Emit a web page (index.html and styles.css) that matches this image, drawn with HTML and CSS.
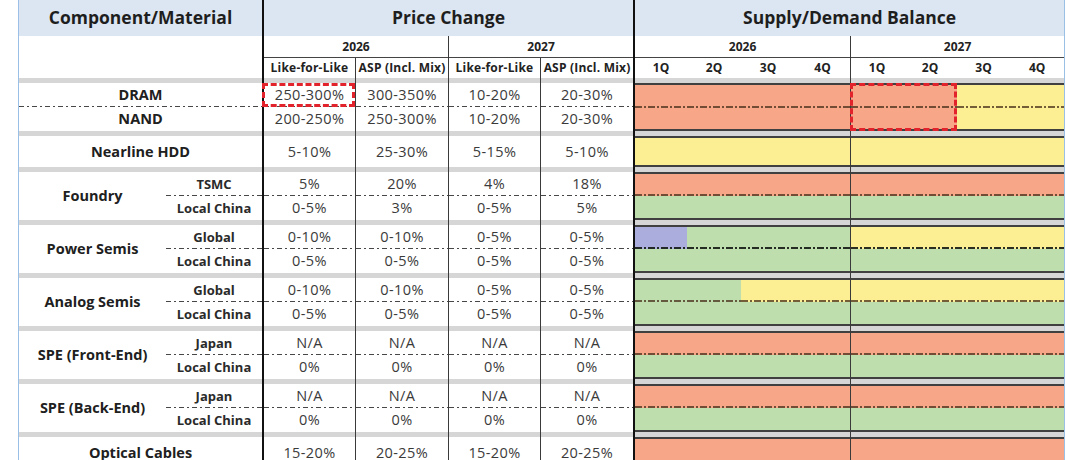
FILE: index.html
```html
<!DOCTYPE html>
<html lang="en">
<head>
<meta charset="utf-8">
<title>Component price and supply/demand outlook</title>
<link rel="stylesheet" href="styles.css">
</head>
<body>
<table class="tbl">
  <colgroup>
    <col class="w-main"><col class="w-sub">
    <col class="w-p1"><col class="w-p2"><col class="w-p3"><col class="w-p4">
    <col class="w-q54"><col class="w-q54"><col class="w-q54"><col class="w-q55">
    <col class="w-q53"><col class="w-q54"><col class="w-q53"><col class="w-q54">
  </colgroup>
  <tr class="r-head">
    <th colspan="2" class="h">Component/Material</th>
    <th colspan="4" class="h L2">Price Change</th>
    <th colspan="8" class="h L2">Supply/Demand Balance</th>
  </tr>
  <tr class="r-year">
    <td colspan="2" rowspan="2"></td>
    <th colspan="2" class="yr L2">2026</th>
    <th colspan="2" class="yr L1">2027</th>
    <th colspan="4" class="yr L2">2026</th>
    <th colspan="4" class="yr L1">2027</th>
  </tr>
  <tr class="r-subh">
    <th class="sh L2">Like-for-Like</th>
    <th class="sh L1">ASP (Incl. Mix)</th>
    <th class="sh L1">Like-for-Like</th>
    <th class="sh L1">ASP (Incl. Mix)</th>
    <th class="q L2">1Q</th><th class="q">2Q</th><th class="q">3Q</th><th class="q">4Q</th>
    <th class="q L1">1Q</th><th class="q">2Q</th><th class="q">3Q</th><th class="q">4Q</th>
  </tr>
  <tr class="sep"><td colspan="2"></td><td class="L2"></td><td class="L1"></td><td class="L1"></td><td class="L1"></td><td colspan="4" class="L2"></td><td colspan="4" class="L1"></td></tr>

  <!-- DRAM / NAND -->
  <tr class="r2">
    <td colspan="2" class="lbl pd">DRAM</td>
    <td class="v L2 pd hl">250-300%</td><td class="v L1 pd">300-350%</td><td class="v L1 pd">10-20%</td><td class="v L1 pd">20-30%</td>
    <td colspan="4" rowspan="2" class="L2 or t b dm"></td>
    <td colspan="2" rowspan="2" class="L1 or t b dm hl"></td>
    <td colspan="2" rowspan="2" class="ye t b dm"></td>
  </tr>
  <tr class="r2">
    <td colspan="2" class="lbl">NAND</td>
    <td class="v L2">200-250%</td><td class="v L1">250-300%</td><td class="v L1">10-20%</td><td class="v L1">20-30%</td>
  </tr>
  <tr class="sep"><td colspan="2"></td><td class="L2"></td><td class="L1"></td><td class="L1"></td><td class="L1"></td><td colspan="4" class="L2"></td><td colspan="4" class="L1"></td></tr>

  <!-- Nearline HDD -->
  <tr class="r1">
    <td colspan="2" class="lbl">Nearline HDD</td>
    <td class="v L2">5-10%</td><td class="v L1">25-30%</td><td class="v L1">5-15%</td><td class="v L1">5-10%</td>
    <td colspan="4" class="L2 ye t b"></td><td colspan="4" class="L1 ye t b"></td>
  </tr>
  <tr class="sep"><td colspan="2"></td><td class="L2"></td><td class="L1"></td><td class="L1"></td><td class="L1"></td><td colspan="4" class="L2"></td><td colspan="4" class="L1"></td></tr>

  <!-- Foundry -->
  <tr class="r2">
    <td rowspan="2" class="lbl">Foundry</td><td class="sub pd">TSMC</td>
    <td class="v L2 pd">5%</td><td class="v L1 pd">20%</td><td class="v L1 pd">4%</td><td class="v L1 pd">18%</td>
    <td colspan="4" class="L2 or t d"></td><td colspan="4" class="L1 or t d"></td>
  </tr>
  <tr class="r2">
    <td class="sub">Local China</td>
    <td class="v L2">0-5%</td><td class="v L1">3%</td><td class="v L1">0-5%</td><td class="v L1">5%</td>
    <td colspan="4" class="L2 gr b"></td><td colspan="4" class="L1 gr b"></td>
  </tr>
  <tr class="sep"><td colspan="2"></td><td class="L2"></td><td class="L1"></td><td class="L1"></td><td class="L1"></td><td colspan="4" class="L2"></td><td colspan="4" class="L1"></td></tr>

  <!-- Power Semis -->
  <tr class="r2">
    <td rowspan="2" class="lbl">Power Semis</td><td class="sub pd">Global</td>
    <td class="v L2 pd">0-10%</td><td class="v L1 pd">0-10%</td><td class="v L1 pd">0-5%</td><td class="v L1 pd">0-5%</td>
    <td class="L2 lv t d dk"></td><td colspan="3" class="gr t d dk"></td><td colspan="4" class="L1 ye t d dk"></td>
  </tr>
  <tr class="r2">
    <td class="sub">Local China</td>
    <td class="v L2">0-5%</td><td class="v L1">0-5%</td><td class="v L1">0-5%</td><td class="v L1">0-5%</td>
    <td colspan="4" class="L2 gr b"></td><td colspan="4" class="L1 gr b"></td>
  </tr>
  <tr class="sep"><td colspan="2"></td><td class="L2"></td><td class="L1"></td><td class="L1"></td><td class="L1"></td><td colspan="4" class="L2"></td><td colspan="4" class="L1"></td></tr>

  <!-- Analog Semis -->
  <tr class="r2">
    <td rowspan="2" class="lbl">Analog Semis</td><td class="sub pd">Global</td>
    <td class="v L2 pd">0-10%</td><td class="v L1 pd">0-10%</td><td class="v L1 pd">0-5%</td><td class="v L1 pd">0-5%</td>
    <td colspan="2" class="L2 gr t d"></td><td colspan="2" class="ye t d"></td><td colspan="4" class="L1 ye t d"></td>
  </tr>
  <tr class="r2">
    <td class="sub">Local China</td>
    <td class="v L2">0-5%</td><td class="v L1">0-5%</td><td class="v L1">0-5%</td><td class="v L1">0-5%</td>
    <td colspan="4" class="L2 gr b"></td><td colspan="4" class="L1 gr b"></td>
  </tr>
  <tr class="sep"><td colspan="2"></td><td class="L2"></td><td class="L1"></td><td class="L1"></td><td class="L1"></td><td colspan="4" class="L2"></td><td colspan="4" class="L1"></td></tr>

  <!-- SPE (Front-End) -->
  <tr class="r2">
    <td rowspan="2" class="lbl">SPE (Front-End)</td><td class="sub pd">Japan</td>
    <td class="v L2 pd">N/A</td><td class="v L1 pd">N/A</td><td class="v L1 pd">N/A</td><td class="v L1 pd">N/A</td>
    <td colspan="4" class="L2 or t d"></td><td colspan="4" class="L1 or t d"></td>
  </tr>
  <tr class="r2">
    <td class="sub">Local China</td>
    <td class="v L2">0%</td><td class="v L1">0%</td><td class="v L1">0%</td><td class="v L1">0%</td>
    <td colspan="4" class="L2 gr b"></td><td colspan="4" class="L1 gr b"></td>
  </tr>
  <tr class="sep"><td colspan="2"></td><td class="L2"></td><td class="L1"></td><td class="L1"></td><td class="L1"></td><td colspan="4" class="L2"></td><td colspan="4" class="L1"></td></tr>

  <!-- SPE (Back-End) -->
  <tr class="r2">
    <td rowspan="2" class="lbl">SPE (Back-End)</td><td class="sub pd">Japan</td>
    <td class="v L2 pd">N/A</td><td class="v L1 pd">N/A</td><td class="v L1 pd">N/A</td><td class="v L1 pd">N/A</td>
    <td colspan="4" class="L2 or t d"></td><td colspan="4" class="L1 or t d"></td>
  </tr>
  <tr class="r2">
    <td class="sub">Local China</td>
    <td class="v L2">0%</td><td class="v L1">0%</td><td class="v L1">0%</td><td class="v L1">0%</td>
    <td colspan="4" class="L2 gr b"></td><td colspan="4" class="L1 gr b"></td>
  </tr>
  <tr class="sep"><td colspan="2"></td><td class="L2"></td><td class="L1"></td><td class="L1"></td><td class="L1"></td><td colspan="4" class="L2"></td><td colspan="4" class="L1"></td></tr>

  <!-- Optical Cables -->
  <tr class="r1">
    <td colspan="2" class="lbl">Optical Cables</td>
    <td class="v L2">15-20%</td><td class="v L1">20-25%</td><td class="v L1">15-20%</td><td class="v L1">20-25%</td>
    <td colspan="4" class="L2 or t b"></td><td colspan="4" class="L1 or t b"></td>
  </tr>
</table>
</body>
</html>
```

FILE: styles.css
```css
html, body {
  margin: 0;
  padding: 0;
  background: #ffffff;
  overflow: hidden;
}

body {
  width: 1080px;
  height: 460px;
  font-family: "Open Sans", "Noto Sans", "Liberation Sans", sans-serif;
  color: #222222;
}

.tbl {
  margin-left: 18px;
  width: 1047px;
  table-layout: fixed;
  border-collapse: separate;
  border-spacing: 0;
  border-left: 1px solid #9bbfe7;
  border-right: 1px solid #9bbfe7;
}

.w-main { width: 147px; }
.w-sub { width: 96px; }
.w-p1 { width: 93px; }
.w-p2 { width: 93px; }
.w-p3 { width: 92px; }
.w-p4 { width: 93px; }
.w-q53 { width: 53px; }
.w-q54 { width: 54px; }
.w-q55 { width: 55px; }

.tbl th,
.tbl td {
  padding: 0;
  box-sizing: border-box;
  text-align: center;
  vertical-align: middle;
  white-space: nowrap;
  line-height: 1.1;
}

.tbl td {
  background-image: var(--lt, none), var(--lb, none), var(--ld, none);
  background-repeat: no-repeat, no-repeat, repeat-x;
  background-size: 100% 2px, 100% 2px, 13px var(--dh, 1px);
  background-position: 0 0, 0 100%, 0 var(--dy, 100%);
}

/* vertical rules */
.L2 { border-left: 2px solid #111111; }
.L1 { border-left: 1px solid #3a3a3a; }

/* row heights */
.r-head { height: 36px; }
.r-year { height: 22px; }
.r-subh { height: 20px; }
.sep { height: 5px; }
.r1 { height: 31px; }
.r2 { height: 24px; }

.sep td { background-color: #d6d6d6; }

/* header band */
.h {
  background: #dce6f2;
  font-size: 17.5px;
  font-weight: 700;
  color: #1e1e1e;
  padding-bottom: 3px;
}

.yr {
  font-size: 12px;
  font-weight: 700;
  color: #222222;
  background: linear-gradient(#444444, #444444) 0 100% / 100% 1px no-repeat;
}

.sh {
  font-size: 12px;
  font-weight: 700;
  letter-spacing: 0.2px;
  color: #222222;
}

.q {
  font-size: 12px;
  font-weight: 700;
  color: #222222;
}

/* body text */
.lbl {
  font-size: 14.5px;
  font-weight: 700;
  color: #202020;
}

.sub {
  font-size: 13px;
  font-weight: 700;
  color: #2a2a2a;
}

.v {
  font-size: 14.5px;
  letter-spacing: 0.4px;
  color: #3a3a3a;
}

/* dash-dot separators */
.pd {
  --ld: linear-gradient(90deg, #474747 0 5px, transparent 5px 8px, #474747 8px 10px, transparent 10px);
}

.d,
.dm {
  --ld: linear-gradient(90deg, rgba(70, 45, 25, 0.75) 0 7px, transparent 7px 9.5px, rgba(70, 45, 25, 0.75) 9.5px 11px, transparent 11px);
  --dh: 2px;
}

.dm { --dy: 50%; }

.dk {
  --ld: linear-gradient(90deg, rgba(20, 25, 20, 0.9) 0 7px, transparent 7px 9.5px, rgba(20, 25, 20, 0.9) 9.5px 11px, transparent 11px);
}

/* supply/demand block edges */
.t { --lt: linear-gradient(#404040, #404040); }
.b { --lb: linear-gradient(#404040, #404040); }

/* supply/demand colours */
.or { background-color: #f7a688; }
.ye { background-color: #fbee93; }
.gr { background-color: #bedeae; }
.lv { background-color: #abaedd; }

/* highlighted boxes */
.hl {
  outline: 3px dashed #e3232c;
  outline-offset: -3px;
}
```
